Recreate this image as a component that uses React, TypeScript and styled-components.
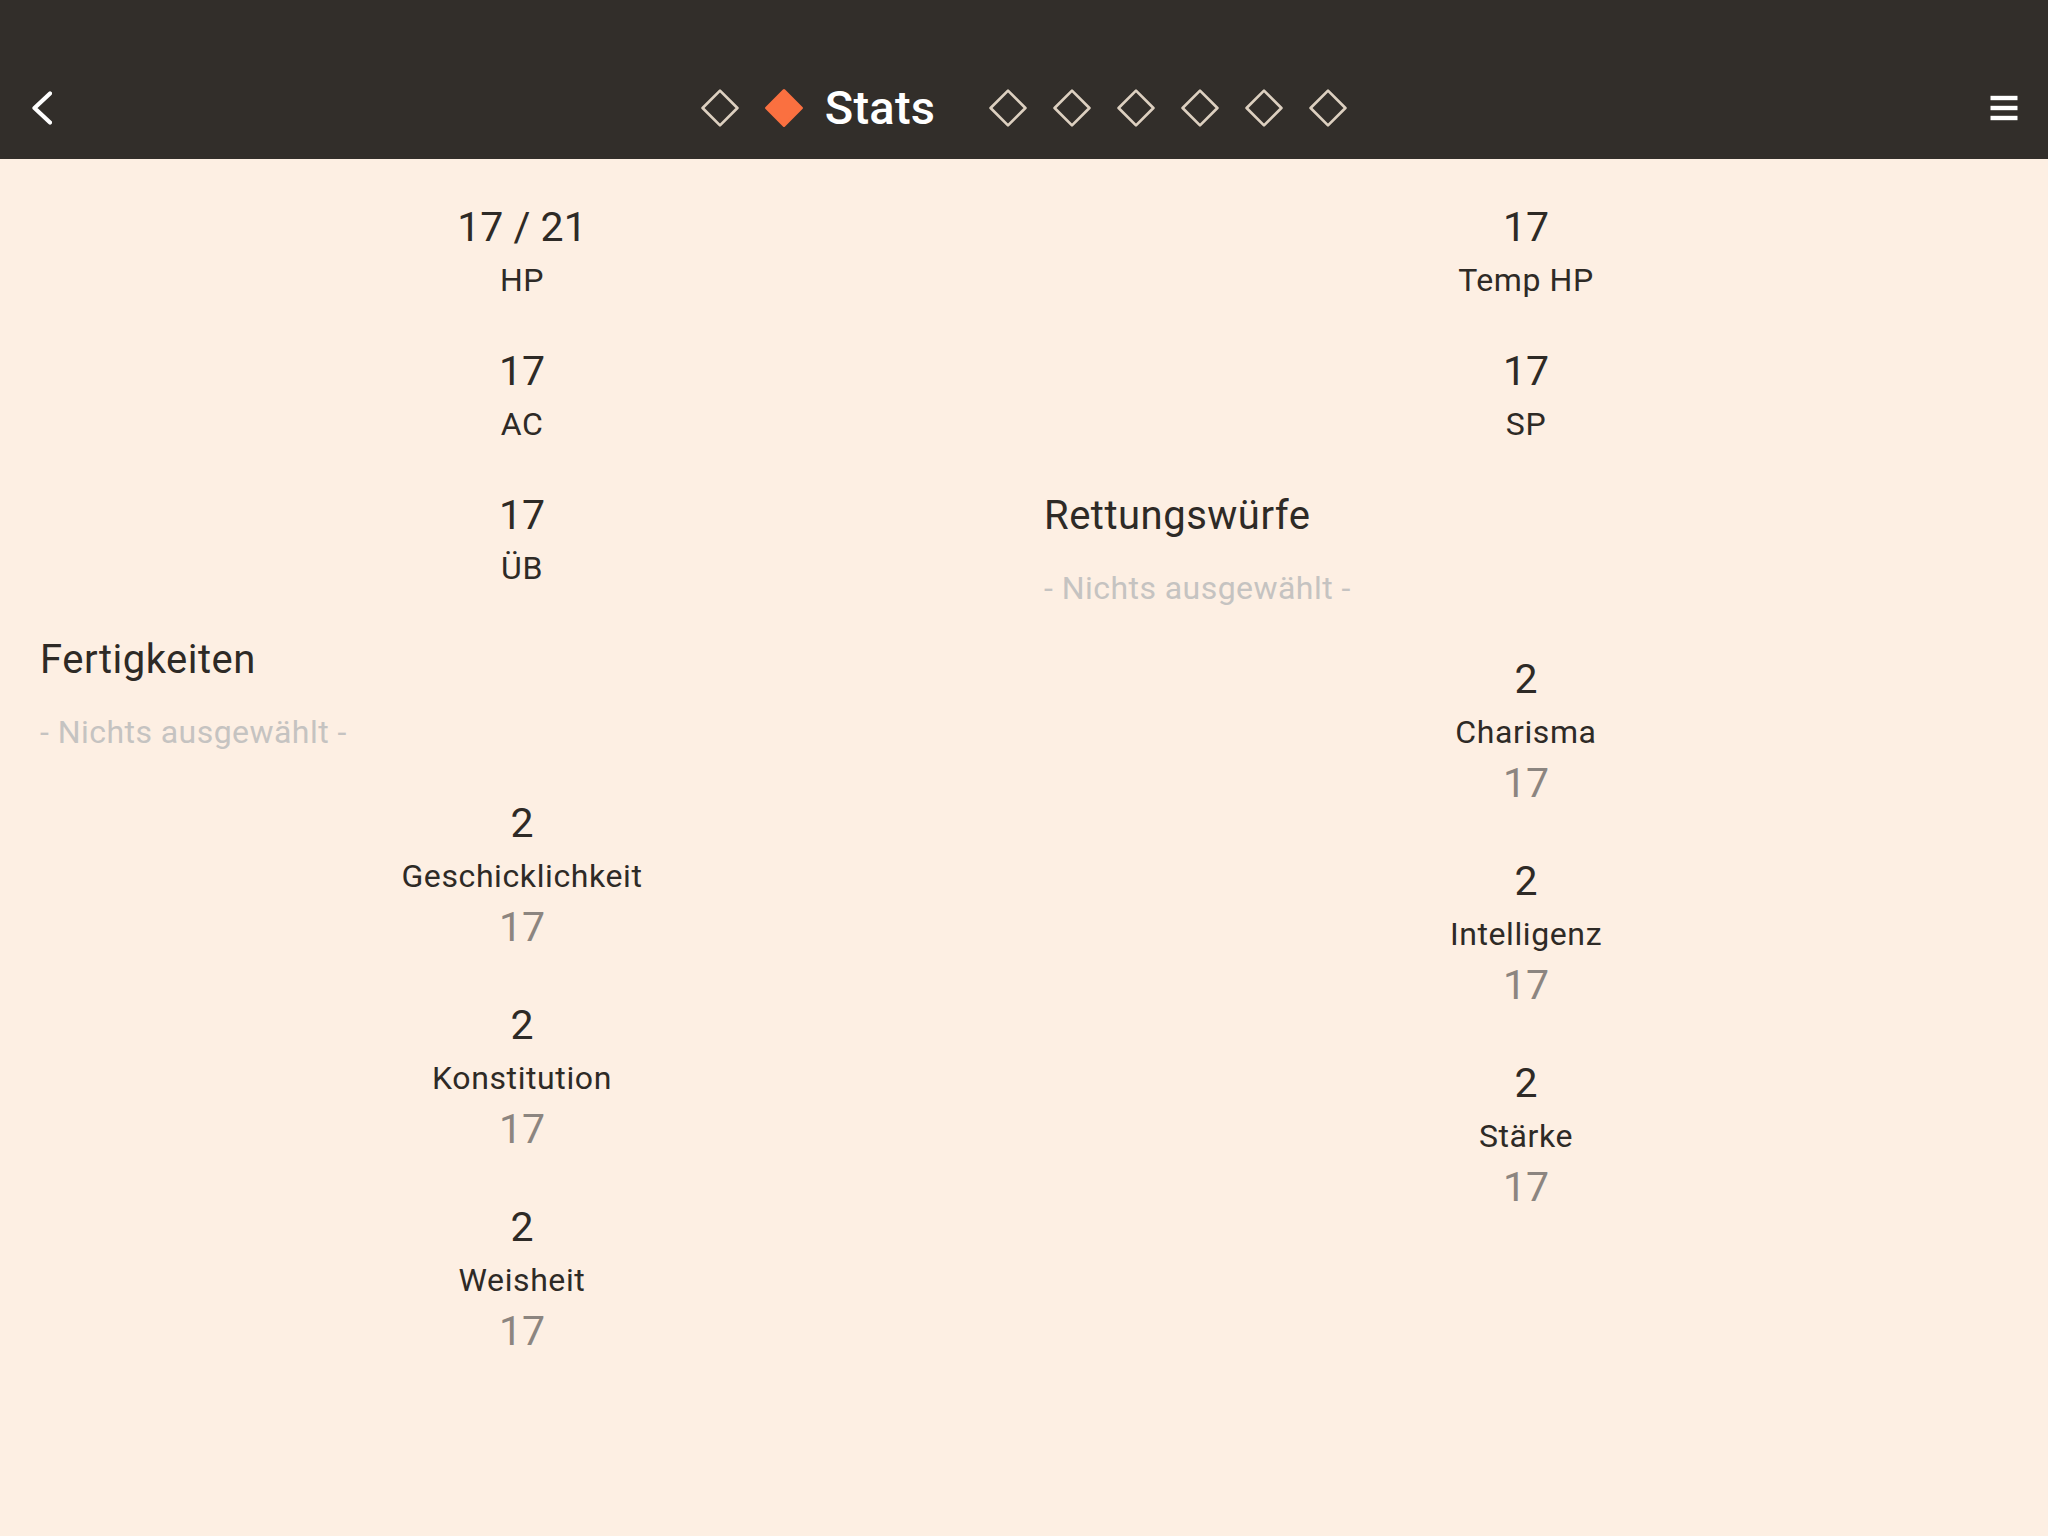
import React from "react";
import styled, { createGlobalStyle } from "styled-components";

const GlobalStyle = createGlobalStyle`
  html, body {
    margin: 0;
    padding: 0;
    background: #fdefe3;
  }
  body {
    font-family: Roboto, "Noto Sans", "Liberation Sans", sans-serif;
    color: #2e2a26;
  }
`;

const Page = styled.div`
  min-height: 1536px;
  background: #fdefe3;
`;

const Header = styled.header`
  background: #322e2a;
  height: 159px;
  padding-top: 56px;
  box-sizing: border-box;
`;

const Toolbar = styled.div`
  height: 103px;
  display: grid;
  grid-template-columns: 1fr auto 1fr;
  align-items: center;
  padding: 0 30px 0 24px;
`;

const IconButton = styled.button<{ $align: "start" | "end" }>`
  justify-self: ${(p) => p.$align};
  background: none;
  border: none;
  padding: 0;
  display: flex;
  align-items: center;
  cursor: pointer;
`;

const Pager = styled.nav`
  display: flex;
  align-items: center;
  margin-left: 6px;
`;

const Dot = styled.svg<{ $gap: number }>`
  width: 38px;
  height: 38px;
  margin-right: ${(p) => p.$gap}px;
  flex: none;
`;

const PageTitle = styled.span`
  font-size: 47px;
  font-weight: 500;
  color: #ffffff;
  letter-spacing: 0.2px;
  margin-right: 54px;
  line-height: 1;
`;

const Content = styled.main`
  display: grid;
  grid-template-columns: 1fr 1fr;
  column-gap: 40px;
  padding: 42px 40px 0;
  align-items: start;
`;

const Column = styled.div`
  display: flex;
  flex-direction: column;
  gap: 38px;
`;

const Block = styled.div<{ $extra?: number }>`
  display: flex;
  flex-direction: column;
  align-items: center;
  padding-bottom: ${(p) => p.$extra ?? 0}px;
`;

const BigNumber = styled.div<{ $muted?: boolean; $h: number }>`
  font-size: 41px;
  line-height: ${(p) => p.$h}px;
  color: ${(p) => (p.$muted ? "#8c8580" : "#2e2a26")};
  letter-spacing: 0;
`;

const Label = styled.div<{ $h: number }>`
  font-size: 32px;
  line-height: ${(p) => p.$h}px;
  letter-spacing: 0.6px;
  color: #2e2a26;
`;

const Section = styled.section<{ $shift?: number }>`
  display: flex;
  flex-direction: column;
  gap: 23px;
  margin-top: ${(p) => p.$shift ?? 0}px;
  padding-bottom: 2px;
`;

const SectionTitle = styled.h2`
  margin: 0;
  font-size: 40px;
  font-weight: 400;
  line-height: 48px;
  letter-spacing: 0.5px;
  color: #2e2a26;
`;

const Placeholder = styled.div`
  font-size: 32px;
  line-height: 50px;
  letter-spacing: 0.45px;
  color: #c5c3c1;
`;

const Diamond = ({ filled, gap }: { filled?: boolean; gap: number }) => (
  <Dot $gap={gap} viewBox="0 0 38 38">
    <polygon
      points="19,1.6 36.4,19 19,36.4 1.6,19"
      fill={filled ? "#fa7040" : "none"}
      stroke={filled ? "#fa7040" : "#ddd0c0"}
      strokeWidth={filled ? 3 : 2.7}
      strokeLinejoin="round"
    />
  </Dot>
);

const Stat = ({ value, label }: { value: string; label: string }) => (
  <Block>
    <BigNumber $h={52}>{value}</BigNumber>
    <Label $h={54}>{label}</Label>
  </Block>
);

const Ability = ({ mod, name, score }: { mod: string; name: string; score: string }) => (
  <Block $extra={11}>
    <BigNumber $h={52}>{mod}</BigNumber>
    <Label $h={55}>{name}</Label>
    <BigNumber $h={46} $muted>
      {score}
    </BigNumber>
  </Block>
);

const EmptySection = ({ title, shift }: { title: string; shift?: number }) => (
  <Section $shift={shift}>
    <SectionTitle>{title}</SectionTitle>
    <Placeholder>- Nichts ausgewählt -</Placeholder>
  </Section>
);

export default function App() {
  return (
    <Page>
      <GlobalStyle />
      <Header>
        <Toolbar>
          <IconButton $align="start" aria-label="Zurück">
            <svg width="28" height="40" viewBox="0 0 28 40">
              <polyline
                points="26,5.5 10.5,20 26,34.5"
                fill="none"
                stroke="#ffffff"
                strokeWidth="4.2"
                strokeLinecap="round"
                strokeLinejoin="round"
              />
            </svg>
          </IconButton>
          <Pager>
            <Diamond gap={26} />
            <Diamond filled gap={22} />
            <PageTitle>Stats</PageTitle>
            <Diamond gap={26} />
            <Diamond gap={26} />
            <Diamond gap={26} />
            <Diamond gap={26} />
            <Diamond gap={26} />
            <Diamond gap={0} />
          </Pager>
          <IconButton $align="end" aria-label="Menü">
            <svg width="28" height="28" viewBox="0 0 28 28">
              <g stroke="#ffffff" strokeWidth="4.4" strokeLinecap="butt">
                <line x1="0.5" y1="4" x2="27.5" y2="4" />
                <line x1="0.5" y1="14" x2="27.5" y2="14" />
                <line x1="0.5" y1="24" x2="27.5" y2="24" />
              </g>
            </svg>
          </IconButton>
        </Toolbar>
      </Header>
      <Content>
        <Column>
          <Stat value="17 / 21" label="HP" />
          <Stat value="17" label="AC" />
          <Stat value="17" label="ÜB" />
          <EmptySection title="Fertigkeiten" shift={3} />
          <Ability mod="2" name="Geschicklichkeit" score="17" />
          <Ability mod="2" name="Konstitution" score="17" />
          <Ability mod="2" name="Weisheit" score="17" />
        </Column>
        <Column>
          <Stat value="17" label="Temp HP" />
          <Stat value="17" label="SP" />
          <EmptySection title="Rettungswürfe" shift={3} />
          <Ability mod="2" name="Charisma" score="17" />
          <Ability mod="2" name="Intelligenz" score="17" />
          <Ability mod="2" name="Stärke" score="17" />
        </Column>
      </Content>
    </Page>
  );
}
